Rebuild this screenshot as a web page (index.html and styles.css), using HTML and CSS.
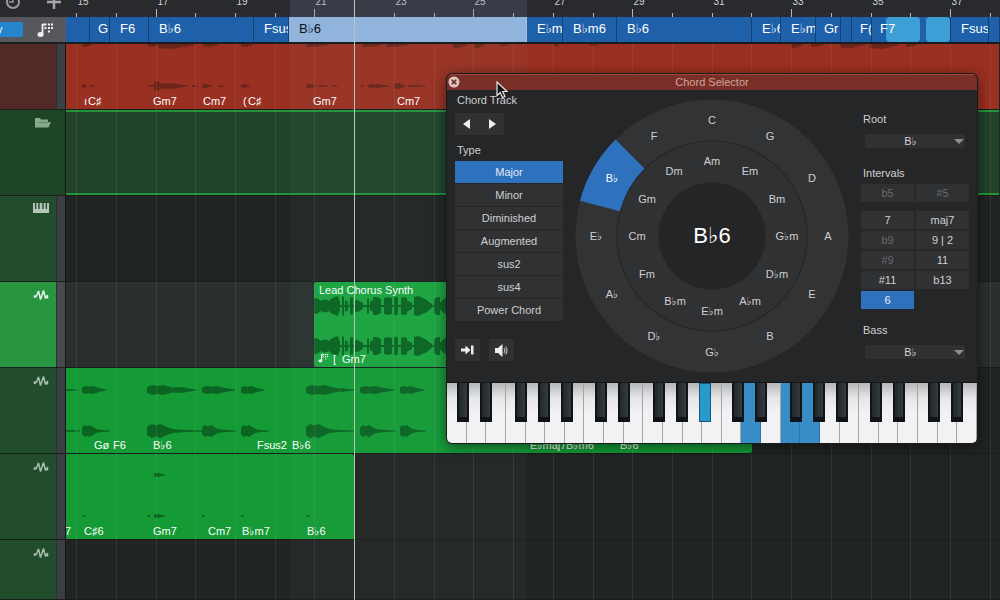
FILE: index.html
```html
<!DOCTYPE html>
<html lang="en">
<head>
<meta charset="utf-8">
<title>Arrangement</title>
<link rel="stylesheet" href="styles.css">
</head>
<body>
<svg width="0" height="0" class="defs" aria-hidden="true">
  <symbol id="wave-icon" viewBox="0 0 16 12"><path d="M1.500 9V6.500L3 8l2.500-6 2 8.500L10.500 1.500l2 8L14.500 6v3.500" fill="none" stroke="currentColor" stroke-width="1.500" stroke-linejoin="bevel"/></symbol>
  <symbol id="chord-icon" viewBox="0 0 17 16"><ellipse cx="3.500" cy="12.500" rx="3" ry="2.500" fill="currentColor"/><path d="M5.500 12.500V2M5.500 2.500h4M11 2.500h2M14 2.500h2M7.500 6h2M11 6h2M14 6h2M11 9.500h2" fill="none" stroke="currentColor" stroke-width="1.800"/></symbol>
</svg>
<main class="daw">
  <header class="corner">
    <svg class="clock" width="14" height="14" viewBox="0 0 14 14"><circle cx="7" cy="7" r="6" fill="none" stroke="#999a9c" stroke-width="2"/><path d="M7 2v5H3" fill="none" stroke="#999a9c" stroke-width="1.500"/></svg>
    <svg class="plus" width="14" height="14" viewBox="0 0 14 14"><path d="M7 0v14M0 7h14" stroke="#a6a7a9" stroke-width="2.500"/></svg>
  </header>
  <div class="ruler"><svg class="ticks" width="100%" height="17"></svg></div>
  <div class="chord-head"><button class="mode">y</button><svg class="chord-mark" width="17" height="16"><use href="#chord-icon"/></svg></div>
  <div class="chords">
    <span class="w24"></span><span class="w20">G</span><span class="w39">F6</span><span class="w105">B♭6</span><span class="w35">Fsus</span><span class="w238 current">B♭6</span><span class="w36">E♭m</span><span class="w54">B♭m6</span><span class="w135">B♭6</span><span class="w29">E♭6</span><span class="w35">E♭m</span><span class="w25">Gr</span><span class="w10"></span><span class="w20">F(</span><span class="w79 patched">F7</span><span class="w38">Fsus</span><span class="rest">I</span>
  </div>

  <div class="head red"></div>
  <section class="lane short"><div class="clip red-clip"><svg class="wave" data-wave="red"></svg>
    <span class="tag" style="left:18px">ı</span><span class="tag" style="left:22px">C♯</span><span class="tag" style="left:87px">Gm7</span><span class="tag" style="left:137px">Cm7</span><span class="tag" style="left:177px">(</span><span class="tag" style="left:182px">C♯</span><span class="tag" style="left:247px">Gm7</span><span class="tag" style="left:331px">Cm7</span></div></section>

  <div class="head folder"><svg width="16" height="11" viewBox="0 0 16 11"><path d="M0 1h5l1 1.500h7V5l3 0-2.500 5.500H0z" fill="#88a98e"/><path d="M3 5.500h11" stroke="#5f8768"/></svg></div>
  <section class="lane"><div class="clip folder-clip"></div></section>

  <div class="head"><svg width="16" height="11" viewBox="0 0 16 11"><path d="M0 0h2v6h1.300V0h2v6h1.400V0h2.600v6h1.400V0h2v6H14V0h2v10H0z" fill="#b4c4b6"/></svg></div>
  <section class="lane"></section>

  <div class="head active"><svg width="16" height="12"><use href="#wave-icon"/></svg></div>
  <section class="lane lit"><div class="clip lead-clip"><svg class="wave" data-wave="lead"></svg><span class="name">Lead Chorus Synth</span>
    <svg class="mini" width="11" height="10"><use href="#chord-icon"/></svg><span class="tag" style="left:19px">[</span><span class="tag" style="left:28px">Gm7</span></div></section>

  <div class="head"><svg width="16" height="12"><use href="#wave-icon"/></svg></div>
  <section class="lane"><div class="clip long-clip"><svg class="wave" data-wave="long"></svg>
    <span class="tag" style="left:28px">Gø</span><span class="tag" style="left:47px">F6</span><span class="tag" style="left:87px">B♭6</span><span class="tag" style="left:191px">Fsus2</span><span class="tag" style="left:226px">B♭6</span><span class="tag" style="left:464px">E♭maj7</span><span class="tag" style="left:500px">B♭m6</span><span class="tag" style="left:554px">B♭6</span></div></section>

  <div class="head"><svg width="16" height="12"><use href="#wave-icon"/></svg></div>
  <section class="lane"><div class="clip half-clip"><svg class="wave" data-wave="half"></svg>
    <span class="tag" style="left:-1px">7</span><span class="tag" style="left:18px">C♯6</span><span class="tag" style="left:87px">Gm7</span><span class="tag" style="left:142px">Cm7</span><span class="tag" style="left:176px">B♭m7</span><span class="tag" style="left:241px">B♭6</span></div></section>

  <div class="head"><svg width="16" height="12"><use href="#wave-icon"/></svg></div>
  <section class="lane"></section>

  <div class="overlay"><div class="loop"></div><svg class="grid" width="100%" height="100%"></svg><div class="playhead"></div></div>
</main>

<section class="dialog" role="dialog" aria-labelledby="dlg-title">
  <header class="title"><button class="close" aria-label="Close"><svg width="12" height="12" viewBox="0 0 12 12"><circle cx="6" cy="6" r="5.500" fill="#dfc5bd"/><path d="M3.700 3.700l4.600 4.600M8.300 3.700L3.700 8.300" stroke="#5d2a24" stroke-width="1.600"/></svg></button><span id="dlg-title">Chord Selector</span></header>
  <div class="body">
    <div class="left">
      <div class="label">Chord Track</div>
      <div class="steps"><button aria-label="Previous"><svg width="8" height="10"><path d="M7 0v10L0 5z" fill="#eee"/></svg></button><button aria-label="Next"><svg width="8" height="10"><path d="M1 0v10l7-5z" fill="#eee"/></svg></button></div>
      <div class="label type">Type</div>
      <div class="types"><button class="on">Major</button><button>Minor</button><button>Diminished</button><button>Augmented</button><button>sus2</button><button>sus4</button><button>Power Chord</button></div>
      <div class="tools"><button aria-label="Insert"><svg width="13" height="10" viewBox="0 0 13 10"><path d="M0 3.500h4.500V.500L9.500 5l-5 4.500v-3H0zM10 .500h2.500v9H10z" fill="#eee"/></svg></button><button aria-label="Listen"><svg width="14" height="13" viewBox="0 0 14 13"><path d="M0 4h3l4.500-4v13L3 9H0z" fill="#eee"/><path d="M9 4q1.500 2.500 0 5M10.500 2.500q3 4 0 8" fill="none" stroke="#bbb" stroke-width="1.200"/></svg></button></div>
    </div>
    <div class="wheel">
      <svg viewBox="0 0 274 274" width="274" height="274"><circle cx="137" cy="137" r="136.500" fill="#323335"/><circle cx="137" cy="137" r="95" fill="#303133" stroke="#252628" stroke-width="1.200"/><circle cx="137" cy="137" r="53.500" fill="#242527"/><path d="M5 101.700A136.500 136.500 0 0 1 40.500 40.500L69.400 69.400A95.500 95.500 0 0 0 44.800 112.300z" fill="#2e71bd"/></svg>
      <output class="chord">B♭6</output>
    </div>
    <div class="right">
      <label class="label" for="root">Root</label>
      <div class="pick"><select id="root"><option>B♭</option></select></div>
      <div class="label intervals">Intervals</div>
      <div class="cells"><button class="dim">b5</button><button class="dim">#5</button></div>
      <div class="cells more"><button>7</button><button>maj7</button><button class="dim">b9</button><button>9 | 2</button><button class="dim">#9</button><button>11</button><button>#11</button><button>b13</button><button class="on">6</button></div>
      <label class="label bass" for="bass">Bass</label>
      <div class="pick"><select id="bass"><option>B♭</option></select></div>
    </div>
  </div>
  <div class="keys"></div>
</section>
<svg class="cursor" width="12" height="18" viewBox="0 0 12 18"><path d="M1 1v13.500l3.200-3 2.300 5 2.400-1-2.200-5H11z" fill="#111" stroke="#e8e8e8" stroke-width="1.200"/></svg>
<script src="app.js"></script>
</body>
</html>
```
FILE: styles.css
```css
* { box-sizing: border-box; }
body { margin: 0; height: 100vh; overflow: hidden; position: relative; background: #202422; font-family: "Liberation Sans", Arial, "DejaVu Sans", sans-serif; color: #fff; }
button, select { margin: 0; padding: 0; border: 0; font: inherit; color: inherit; }
.defs { position: absolute; }
svg { display: block; }
.daw { position: relative; display: grid; grid-template-columns: 66px 1fr; grid-template-rows: 17px 27px 66px repeat(5, 86px); height: 100%; overflow: hidden; }
.corner { background: #292a2d; display: flex; gap: 27px; padding-left: 6px; overflow: hidden; }
.corner svg { margin-top: -5px; }
.ruler { background: #292a2d; position: relative; overflow: hidden; }
.ticks text { fill: #d0d1d3; font-size: 10px; }
.ticks line { stroke: #b5b6b8; }
.chord-head { background: #57585e; display: flex; align-items: center; justify-content: space-between; padding-right: 12px; border-bottom: 2px solid #1b1c1e; }
.mode { width: 23px; height: 15px; border-radius: 0 2px 2px 0; background: #2486cc; font-size: 11px; line-height: 13px; text-align: left; text-indent: -3px; overflow: hidden; }
.chord-mark { color: #f0f0f0; }
.chords { display: flex; background: #1f5fa6; border-bottom: 2px solid #1b1c1e; min-width: 0; overflow: hidden; }
.chords span { position: relative; z-index: 0; flex: none; height: 25px; padding-left: 10px; border-right: 1px solid #17406f; font-size: 13px; line-height: 24px; overflow: hidden; white-space: nowrap; background: #1e61aa; }
.chords .rest { flex: 1; }
.w10 { width: 10px; } .w20 { width: 20px; } .w24 { width: 24px; } .w25 { width: 25px; } .w29 { width: 29px; } .w35 { width: 35px; }
.w36 { width: 36px; } .w38 { width: 38px; } .w39 { width: 39px; } .w54 { width: 54px; } .w79 { width: 79px; } .w105 { width: 105px; } .w135 { width: 135px; } .w238 { width: 238px; }
.chords .w20, .chords .w25, .chords .patched { padding-left: 8px; }
.chords .current { background: #90b4dc; color: #0c1118; border-color: #a9bed8; }
.patched::before, .patched::after { content: ""; position: absolute; z-index: -1; top: 0; bottom: 0; border-radius: 4px; background: #3d9fd5; }
.patched::before { left: 14px; width: 34px; }
.patched::after { left: 54px; right: 0; }
.head { background: linear-gradient(90deg, #214d2c 56px, #2c3033 56px 57px, #3a3d41 57px); border-right: 1px solid #141617; border-bottom: 1px solid #19201c; padding: 7px 16px; display: flex; justify-content: flex-end; align-items: flex-start; color: #a9bcab; }
.head.red { background: linear-gradient(90deg, #512a25 56px, #2c3033 56px 57px, #3a4043 57px); }
.head.folder { background: #1e4427; padding-right: 14px; }
.head.active { background: linear-gradient(90deg, #289540 56px, #2c3033 56px 57px, #46494e 57px); color: #e2f1e4; }
.lane { position: relative; min-width: 0; overflow: hidden; border-bottom: 1px solid #191c1b; background: #202422; }
.lane.lit { background: #2a302e; }
.clip { position: absolute; inset: 0 auto 0 0; overflow: hidden; background: #149b35; }
.red-clip { right: 1px; background: #9a3021; }
.folder-clip { right: 1px; background: #204329; border: solid #249338; border-width: 2px 0; }
.lead-clip { left: 248px; width: 300px; background: #1ba43f; border-radius: 3px; }
.long-clip { width: 686px; border-radius: 0 0 3px 0; }
.half-clip { width: 288px; border-radius: 0 3px 0 0; }
.wave { position: absolute; inset: 0; width: 100%; height: 100%; fill: #0b6422; }
.red-clip .wave { fill: #6d241b; }
.tag { position: absolute; bottom: 1px; font-size: 11px; line-height: 13px; white-space: nowrap; }
.name { position: relative; display: block; padding: 2px 5px; font-size: 11px; line-height: 13px; }
.mini { position: absolute; left: 4px; bottom: 4px; }
.overlay { position: absolute; inset: 0 0 0 66px; pointer-events: none; }
.grid { position: absolute; top: 44px; left: 0; height: calc(100% - 44px); }
.grid line { stroke: #b4ccb4; stroke-opacity: .11; }
.loop { position: absolute; inset: 0 auto 0 224px; width: 237px; background: linear-gradient(rgba(110, 125, 165, .22) 17px, transparent 17px 44px, rgba(120, 190, 180, .04) 44px); }
.playhead { position: absolute; top: 0; bottom: 0; left: 288px; width: 1px; background: #b9c3b9; }
.dialog { position: absolute; left: 446px; top: 73px; width: 532px; border: 1px solid #191b1c; border-radius: 6px; background: #252628; box-shadow: 0 3px 14px rgba(0, 0, 0, .5); color: #cfd0d1; font-size: 11px; overflow: hidden; }
.title { height: 16px; position: relative; background: #792f27; box-shadow: inset 0 1px #9b4a40; color: #d1a49c; text-align: center; line-height: 16px; }
.close { position: absolute; left: 1px; top: 2px; background: none; }
.body { display: grid; grid-template-columns: 108px 1fr 108px; padding: 0 8px; height: 292px; }
.left { padding-top: 3px; }
.right { padding-top: 22px; }
.label { display: block; line-height: 14px; padding-left: 2px; }
.body button { background: #303133; }
.steps { display: flex; width: 49px; margin-top: 6px; }
.steps button { flex: 1; height: 22px; display: grid; place-items: center; }
.type { margin-top: 8px; }
.types { display: grid; grid-auto-rows: 22px; gap: 1px; margin-top: 4px; }
.body button.on { background: #2e71bd; color: #e4ebf4; }
.tools { display: flex; gap: 9px; margin-top: 18px; }
.tools button { width: 25px; height: 22px; display: grid; place-items: center; }
.wheel { position: relative; width: 274px; height: 274px; justify-self: center; margin-top: 9px; }
.body .wheel button { position: absolute; transform: translate(-50%, -50%); background: none; line-height: 18px; white-space: nowrap; }
.body .wheel .picked { color: #fff; }
.chord { position: absolute; inset: 0; display: grid; place-items: center; pointer-events: none; color: #fff; font-size: 22px; }
.pick { position: relative; margin: 8px 4px 0; height: 14px; }
.pick::after { content: ""; position: absolute; right: 1px; top: 5px; border: 5px solid transparent; border-top-color: #8d8e90; border-bottom: 0; }
select { appearance: none; display: block; width: 100%; height: 14px; padding-right: 9px; border-radius: 2px; background: #303133; text-align: center; text-align-last: center; line-height: 14px; }
.intervals { margin-top: 18px; }
.cells { display: grid; grid-template-columns: 1fr 1fr; grid-auto-rows: 18px; gap: 2px; margin-top: 4px; }
.more { margin-top: 9px; }
.cells .dim { color: #696a6c; }
.bass { margin-top: 14px; }
.keys { position: relative; display: flex; height: 61px; border-top: 1px solid #141516; }
.white { flex: 1; padding: 0; border-right: 1px solid #a5a6a8; background: linear-gradient(#b5b6b7, #e6e6e8 15px, #f2f2f4 30px); }
.white.hit { background: #398dc7; border-color: #2b75a8; }
.black { position: absolute; top: 0; width: 12px; height: 39px; transform: translateX(-50%); border: solid #111416; border-width: 0 2px 5px; background: linear-gradient(90deg, #22282b, #343b3f); }
.black.hit { background: #2b98cc; border: 1px solid #15587c; }
.cursor { position: absolute; left: 496px; top: 81px; }
```
FILE: app.js
```js
const NS = "http://www.w3.org/2000/svg";
const add = (parent, tag, attrs, text) => {
  const el = document.createElementNS(NS, tag);
  for (const k in attrs) el.setAttribute(k, attrs[k]);
  if (text) el.textContent = text;
  parent.append(el);
};

// Bar lines: bar 17 sits 90px into the timeline.
const ticks = document.querySelector(".ticks");
const grid = document.querySelector(".grid");
for (let bar = 15; bar < 60; bar++) {
  const x = Math.floor(90 + (bar - 17) * 39.73) + 0.5;
  add(ticks, "line", { x1: x, x2: x, y1: bar % 4 === 1 ? 9 : 13, y2: 17 });
  if (bar % 2) add(ticks, "text", { x: x + 1, y: 5 }, String(bar));
  add(grid, "line", { x1: x, x2: x, y1: 0, y2: 2000 });
}

// Each burst: [start, centre line, length, peak half-height]
const bursts = {
  red: [[16,42,5,2],[24,42,5,1],[82,42,8,1],[88,42,9,5],[94,42,28,3],[126,42,6,1],[136,42,10,2],[152,42,6,1],[175,42,9,2],[240,42,10,2],[252,42,10,1],[266,42,6,1],[295,42,3,1],[302,42,22,2],[328,42,12,3],[342,42,18,1],
    [16,1,10,2],[82,0,12,3],[92,1,36,4],[137,1,15,2],[175,1,12,2],[240,1,22,2],[296,1,20,2],[320,1,22,2],[387,1,14,3],[408,1,10,3],[434,1,8,1],[488,1,5,2],[524,1,8,1],[725,1,12,3],[745,1,12,2],[774,1,25,3],[804,1,28,4],[840,1,10,2]],
  long: [[0,22,12,1],[16,22,24,4],[81,22,36,5],[106,22,24,3],[136,22,33,4],[175,22,23,4],[240,22,40,5],[268,22,20,2],[294,22,34,4],[334,22,24,4],
    [0,63,14,1],[16,63,18,6],[16,63,28,2],[81,63,30,7],[81,63,56,2],[136,63,20,6],[136,63,34,2],[175,63,18,6],[175,63,28,2],[240,63,28,7],[240,63,48,2],[294,63,20,6],[294,63,36,2],[334,63,15,6],[334,63,26,2]],
  half: [[88,21,11,2],[16,62,4,1],[81,62,4,1],[88,62,11,2],[136,62,3,1],[175,62,3,1],[241,62,3,1]]
};
const burst = ([x, y, w, h]) =>
  `M${x} ${y - h * .6}L${x + w * .15} ${y - h}L${x + w * .3} ${y - h * .8}L${x + w * .45} ${y - h}L${x + w * .7} ${y - h * .5}L${x + w} ${y - .5}V${y + .5}L${x + w * .7} ${y + h * .5}L${x + w * .45} ${y + h}L${x + w * .3} ${y + h * .8}L${x + w * .15} ${y + h}L${x} ${y + h * .6}z`;
for (const name in bursts) {
  add(document.querySelector(`[data-wave=${name}]`), "path", { d: bursts[name].map(burst).join("") });
}

// Dense pulses of the synth lead: [start, left half-height, end, right half-height]
const pulses = [[0,8,7,5],[7,5,14,6],[13,4,24,10],[23,10,26,4],[28,9,30,9],[31,5,34,4],[36,8,39,8],[40,6,49,3],[53,7,55,7],[56,4,60,5],[59,9,67,7],[70,8,78,8],[80,9,84,8],[87,7,98,3],[87,8,93,8],[100,9,107,9],[106,9,118,2],[120,7,126,9],[126,3,132,8]];
const lead = document.querySelector("[data-wave=lead]");
for (const y of [24, 64]) {
  add(lead, "path", { d: `M0 ${y - 1}H134V${y + 1}H0z` + pulses.map(([a, h, b, k]) => `M${a} ${y - h}L${(a + b) / 2} ${y - (h + k) / 2 - 1}L${b} ${y - k}V${y + k}L${(a + b) / 2} ${y + (h + k) / 2 + 1}L${a} ${y + h}z`).join("") });
}

// Circle of fifths
const wheel = document.querySelector(".wheel");
const ring = (names, r) => names.forEach((name, i) => {
  const b = document.createElement("button");
  const a = i * Math.PI / 6;
  b.textContent = name;
  b.style.left = Math.round(137 + r * Math.sin(a)) + "px";
  b.style.top = Math.round(137 - r * Math.cos(a)) + "px";
  if (name === "B♭") b.className = "picked";
  wheel.append(b);
});
ring(["C", "G", "D", "A", "E", "B", "G♭", "D♭", "A♭", "E♭", "B♭", "F"], 116);
ring(["Am", "Em", "Bm", "G♭m", "D♭m", "A♭m", "E♭m", "B♭m", "Fm", "Cm", "Gm", "Dm"], 75);

// Keyboard: 27 white keys starting on C
const keys = document.querySelector(".keys");
const key = (cls, label) => {
  const b = document.createElement("button");
  b.className = cls;
  b.setAttribute("aria-label", label);
  keys.append(b);
  return b;
};
for (let i = 0; i < 27; i++) key([15, 17, 18].includes(i) ? "white hit" : "white", "CDEFGAB"[i % 7]);
const sharps = [[16, "C#"], [39, "D#"], [74, "F#"], [97, "G#"], [120, "A#"]];
for (let oct = 0; oct < 4; oct++) {
  sharps.forEach(([x, label], i) => {
    if (oct === 3 && i === 4) return;
    key(oct === 1 && i === 4 ? "black hit" : "black", label).style.left = (x + oct * 137.7) / 5.3 + "%";
  });
}
```
